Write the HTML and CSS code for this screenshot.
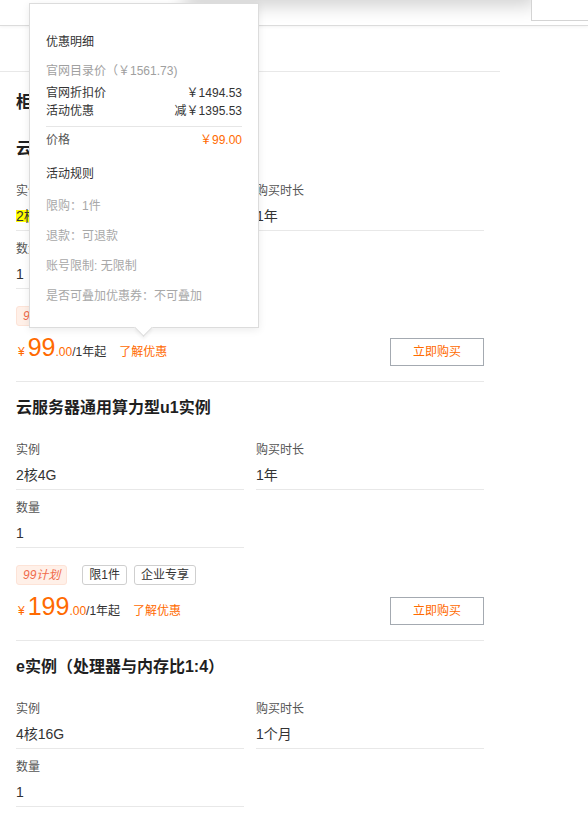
FILE: index.html
```html
<!DOCTYPE html>
<html lang="zh-CN">
<head>
<meta charset="utf-8">
<title>优惠</title>
<link rel="stylesheet" href="styles.css">
</head>
<body>
<div class="topbar"></div>
<div class="shade"></div>
<div class="corner"></div>

<div class="panel">
  <div class="panel-tabs"></div>
  <div class="panel-body">
    <h2 class="cat-title">柜台专享</h2>

    <section class="product">
      <h3 class="p-title">云服务器ECS经济型e实例</h3>
      <div class="fields">
        <div class="field"><div class="f-label">实例</div><div class="f-value"><span class="hl">2核2G</span></div></div>
        <div class="field"><div class="f-label">购买时长</div><div class="f-value">1年</div></div>
        <div class="field"><div class="f-label">数量</div><div class="f-value">1</div></div>
      </div>
      <div class="tags"><span class="tag tag-plan">99计划</span><span class="tag">限1件</span><span class="tag">企业专享</span></div>
      <div class="buy-row">
        <div class="price"><span class="cur">¥</span><span class="num">99</span><span class="dec">.00</span><span class="unit">/1年起</span><span class="promo">了解优惠</span></div>
        <button class="btn">立即购买</button>
      </div>
    </section>

    <section class="product">
      <h3 class="p-title">云服务器通用算力型u1实例</h3>
      <div class="fields">
        <div class="field"><div class="f-label">实例</div><div class="f-value">2核4G</div></div>
        <div class="field"><div class="f-label">购买时长</div><div class="f-value">1年</div></div>
        <div class="field"><div class="f-label">数量</div><div class="f-value">1</div></div>
      </div>
      <div class="tags"><span class="tag tag-plan">99计划</span><span class="tag">限1件</span><span class="tag">企业专享</span></div>
      <div class="buy-row">
        <div class="price"><span class="cur">¥</span><span class="num">199</span><span class="dec">.00</span><span class="unit">/1年起</span><span class="promo">了解优惠</span></div>
        <button class="btn">立即购买</button>
      </div>
    </section>

    <section class="product">
      <h3 class="p-title">e实例（处理器与内存比1:4）</h3>
      <div class="fields">
        <div class="field"><div class="f-label">实例</div><div class="f-value">4核16G</div></div>
        <div class="field"><div class="f-label">购买时长</div><div class="f-value">1个月</div></div>
        <div class="field"><div class="f-label">数量</div><div class="f-value">1</div></div>
      </div>
    </section>
  </div>
</div>

<div class="pop">
  <div class="pop-head">优惠明细</div>
  <div class="pop-list">
    <div class="pop-row muted">官网目录价（￥1561.73)</div>
    <div class="pop-row"><span>官网折扣价</span><span>￥1494.53</span></div>
    <div class="pop-row"><span>活动优惠</span><span>减￥1395.53</span></div>
  </div>
  <div class="pop-total"><span>价格</span><span class="pop-price">￥99.00</span></div>
  <div class="pop-head rules-head">活动规则</div>
  <ul class="rules">
    <li>限购：1件</li>
    <li>退款：可退款</li>
    <li>账号限制: 无限制</li>
    <li>是否可叠加优惠券：不可叠加</li>
  </ul>
  <span class="pop-arrow"></span>
</div>
</body>
</html>
```

FILE: styles.css
```css
html, body {
  margin: 0;
  padding: 0;
  background: #fff;
}
body {
  font-family: "Liberation Sans", "Noto Sans CJK SC", sans-serif;
  font-size: 12px;
  color: #333;
  overflow: hidden;
}

.topbar {
  height: 25px;
  border-bottom: 1px solid #dcdcdc;
  box-shadow: 0 1px 3px rgba(0, 0, 0, 0.05);
}
.shade {
  position: absolute;
  top: -26px;
  left: 190px;
  width: 340px;
  height: 24px;
  background: #fff;
  box-shadow: 0 2px 18px 6px rgba(0, 0, 0, 0.18);
}
.corner {
  position: absolute;
  top: 0;
  right: 0;
  width: 56px;
  height: 20px;
  background: #fff;
  border-left: 1px solid #d4d4d4;
  border-bottom: 1px solid #d4d4d4;
}

.panel {
  width: 500px;
}
.panel-tabs {
  height: 45px;
  border-bottom: 1px solid #e8e8e8;
}
.panel-body {
  padding: 0 16px;
}
.cat-title {
  margin: 21px 0 10px;
  font-size: 17px;
  line-height: 20px;
  font-weight: bold;
  color: #222;
}

.product {
  padding: 14px 0 15px;
  border-top: 1px solid #e8e8e8;
}
.product:first-of-type {
  border-top: 0;
}
.p-title {
  margin: 0 0 12px;
  font-size: 16px;
  line-height: 24px;
  font-weight: bold;
  color: #1f1f1f;
}
.fields {
  display: grid;
  grid-template-columns: 1fr 1fr;
  column-gap: 12px;
}
.field {
  padding: 8px 0 4px;
  border-bottom: 1px solid #e8e8e8;
}
.f-label {
  font-size: 12px;
  line-height: 20px;
  color: #555;
}
.f-value {
  margin-top: 5px;
  font-size: 14px;
  line-height: 20px;
  color: #333;
}
.hl {
  display: inline-block;
  line-height: 12px;
  background: #ffff00;
}

.tags {
  display: flex;
  margin-top: 17px;
}
.tag {
  height: 20px;
  box-sizing: border-box;
  padding: 0 6px;
  margin-right: 7px;
  border: 1px solid #cfcfcf;
  border-radius: 3px;
  font-size: 12px;
  line-height: 18px;
  color: #333;
}
.tag-plan {
  padding: 0 6px;
  margin-right: 15px;
  background: #fff0e8;
  border-color: #fde3d7;
  color: #f06a4a;
  font-style: italic;
}

.buy-row {
  display: flex;
  justify-content: space-between;
  align-items: center;
  margin-top: 12px;
}
.price {
  font-size: 12px;
  line-height: 28px;
  color: #ff6a00;
  white-space: nowrap;
}
.cur {
  margin: 0 3px 0 2px;
}
.num {
  font-size: 25px;
  line-height: 18px;
}
.unit {
  color: #333;
}
.promo {
  margin-left: 13px;
  color: #ff6a00;
}
.btn {
  width: 94px;
  height: 28px;
  box-sizing: border-box;
  padding: 0;
  border: 1px solid #a4aab1;
  background: #fff;
  color: #ff6a00;
  font-family: inherit;
  font-size: 12px;
  line-height: 26px;
  text-align: center;
}

/* popover */
.pop {
  position: absolute;
  left: 29px;
  top: 3px;
  width: 196px;
  padding: 28px 16px 16px;
  background: #fff;
  border: 1px solid #dcdcdc;
  box-shadow: 0 2px 8px rgba(0, 0, 0, 0.08);
  font-size: 12px;
  line-height: 18px;
  color: #333;
  z-index: 10;
}
.pop-head {
  line-height: 20px;
  color: #333;
}
.pop-list {
  margin-top: 10px;
}
.pop-row {
  display: flex;
  justify-content: space-between;
}
.pop-row.muted {
  margin-bottom: 4px;
  color: #a0a0a0;
}
.pop-total {
  display: flex;
  justify-content: space-between;
  margin-top: 6px;
  padding-top: 4px;
  border-top: 1px solid #e6e6e6;
  color: #555;
}
.pop-price {
  color: #ff6a00;
}
.rules-head {
  margin-top: 16px;
  line-height: 18px;
}
.rules {
  margin: 8px 0 0;
  padding: 0;
  list-style: none;
  line-height: 30px;
  color: #a8a8a8;
}
.pop-arrow {
  position: absolute;
  left: 107px;
  bottom: -7px;
  width: 12px;
  height: 12px;
  background: #fff;
  border-right: 1px solid #dcdcdc;
  border-bottom: 1px solid #dcdcdc;
  box-shadow: 2px 2px 3px rgba(0, 0, 0, 0.05);
  transform: rotate(45deg);
}
```
